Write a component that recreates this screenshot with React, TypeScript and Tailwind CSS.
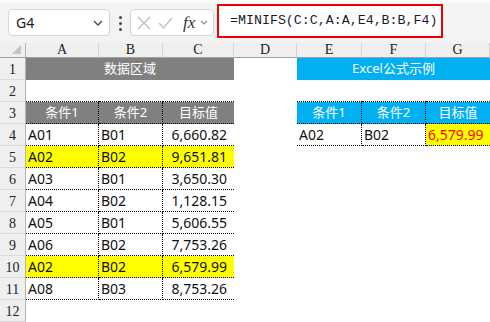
const cols = ["A", "B", "C", "D", "E", "F", "G"];

type Row = { a: string; b: string; c: string; hi?: boolean };

const data: Row[] = [
  { a: "A01", b: "B01", c: "6,660.82" },
  { a: "A02", b: "B02", c: "9,651.81", hi: true },
  { a: "A03", b: "B01", c: "3,650.30" },
  { a: "A04", b: "B02", c: "1,128.15" },
  { a: "A05", b: "B01", c: "5,606.55" },
  { a: "A06", b: "B02", c: "7,753.26" },
  { a: "A02", b: "B02", c: "6,579.99", hi: true },
  { a: "A08", b: "B03", c: "8,753.26" },
];

const dot = "border-black border-dotted";

function RowNum({ n }: { n: number }) {
  return (
    <div className="flex items-end justify-center border-r border-b border-r-[#b4b4b4] border-b-[#dadada] bg-[#efefef] pb-[2px] font-['Liberation_Serif',serif] text-[14px] leading-none text-[#222]">
      {n}
    </div>
  );
}

function Cell({
  children,
  className = "",
}: {
  children?: React.ReactNode;
  className?: string;
}) {
  return (
    <div className={`flex items-center overflow-hidden whitespace-nowrap ${className}`}>
      {children}
    </div>
  );
}

export default function App() {
  return (
    <div className="h-[322px] w-[490px] overflow-hidden bg-white font-['Noto_Sans','Noto_Sans_CJK_SC',sans-serif]">
      {/* formula bar */}
      <div className="flex h-[43px] items-start border-t-[3px] border-t-[#fafafa] bg-[#f3f3f3] pt-[1px]">
        <div className="ml-[8px] mt-[5px] flex h-[27px] w-[102px] items-center justify-between rounded-[4px] border border-[#d6d6d6] bg-white pl-[7px] pr-[6px]">
          <span className="text-[14px] text-[#222]">G4</span>
          <svg width="10" height="6" viewBox="0 0 10 6" fill="none" stroke="#444" strokeWidth="1.3">
            <path d="M1 1l4 4 4-4" />
          </svg>
        </div>
        <div className="ml-[9px] mt-[12px] flex flex-col gap-[3px]">
          <span className="h-[3px] w-[3px] rounded-full bg-[#444]" />
          <span className="h-[3px] w-[3px] rounded-full bg-[#444]" />
          <span className="h-[3px] w-[3px] rounded-full bg-[#444]" />
        </div>
        <div className="ml-[8px] mt-[5px] flex h-[27px] w-[84px] items-center rounded-[4px] border border-[#d6d6d6] bg-white pl-[6px]">
          <svg width="14" height="14" viewBox="0 0 14 14" stroke="#bdbdbd" strokeWidth="1.2">
            <path d="M1 1l12 12M13 1L1 13" />
          </svg>
          <svg className="ml-[7px]" width="15" height="12" viewBox="0 0 15 12" fill="none" stroke="#bdbdbd" strokeWidth="1.2">
            <path d="M1 6l4.5 5L14 1" />
          </svg>
          <span className="ml-[10px] font-['Liberation_Serif',serif] text-[17px] italic leading-none text-[#333]">
            fx
          </span>
          <svg className="ml-[5px]" width="8" height="5" viewBox="0 0 8 5" fill="none" stroke="#888" strokeWidth="1.1">
            <path d="M1 1l3 3 3-3" />
          </svg>
        </div>
        <div className="ml-[3px] flex h-[34px] w-[226px] items-center border-2 border-[#ee0000] bg-white pl-[11px]">
          <span className="font-['Liberation_Mono',monospace] text-[13.3px] text-[#1b1b2f]">
            =MINIFS(C:C,A:A,E4,B:B,F4)
          </span>
        </div>
      </div>

      {/* sheet */}
      <div className="grid grid-cols-[26px_73px_64px_71px_63px_65px_64px_64px] grid-rows-[15px] auto-rows-[22px]">
        {/* column header */}
        <div className="relative border-r border-b border-r-[#b4b4b4] border-b-[#a0a0a0] bg-[#efefef]">
          <svg className="absolute right-[4px] bottom-[3px]" width="9" height="9" viewBox="0 0 9 9">
            <path d="M9 0V9H0z" fill="#c4c4c4" />
          </svg>
        </div>
        {cols.map((c) => (
          <div
            key={c}
            className="flex items-center justify-center border-r border-b border-r-[#d3d3d3] border-b-[#a0a0a0] bg-[#efefef] font-['Liberation_Serif',serif] text-[14px] leading-none text-[#222]"
          >
            {c}
          </div>
        ))}

        {/* row 1 */}
        <RowNum n={1} />
        <Cell className="col-span-3 justify-center bg-[#808080] text-[13px] text-white">数据区域</Cell>
        <Cell />
        <Cell className="col-span-3 justify-center bg-[#00b0f0] text-[13px] text-white">Excel公式示例</Cell>

        {/* row 2 */}
        <RowNum n={2} />
        <Cell className={`border-b ${dot}`} />
        <Cell className={`border-b ${dot}`} />
        <Cell className={`border-b ${dot}`} />
        <Cell />
        <Cell className={`border-b ${dot}`} />
        <Cell className={`border-b ${dot}`} />
        <Cell className={`border-b ${dot}`} />

        {/* row 3 */}
        <RowNum n={3} />
        {["条件1", "条件2", "目标值"].map((t, j) => (
          <Cell
            key={"l" + t}
            className={`justify-center border-b ${j < 2 ? "border-r" : ""} ${dot} bg-[#808080] text-[13px] text-white`}
          >
            {t}
          </Cell>
        ))}
        <Cell />
        {["条件1", "条件2", "目标值"].map((t, j) => (
          <Cell
            key={"r" + t}
            className={`justify-center border-b ${j < 2 ? "border-r" : ""} ${dot} bg-[#00b0f0] text-[13px] text-white`}
          >
            {t}
          </Cell>
        ))}

        {/* data rows */}
        {data.map((r, i) => {
          const bg = r.hi ? "bg-[#ffff00]" : "bg-white";
          return [
            <RowNum key={"n" + i} n={i + 4} />,
            <Cell key={"a" + i} className={`border-r border-b ${dot} ${bg} pl-[2px] text-[14px] text-[#111]`}>
              {r.a}
            </Cell>,
            <Cell key={"b" + i} className={`border-r border-b ${dot} ${bg} pl-[2px] text-[14px] text-[#111]`}>
              {r.b}
            </Cell>,
            <Cell key={"c" + i} className={`justify-end border-b ${dot} ${bg} pr-[7px] text-[14px] text-[#111]`}>
              {r.c}
            </Cell>,
            i === 0 ? (
              [
                <Cell key="d0" />,
                <Cell key="e0" className={`border-r border-b ${dot} pl-[2px] text-[14px] text-[#111]`}>
                  A02
                </Cell>,
                <Cell key="f0" className={`border-r border-b ${dot} pl-[2px] text-[14px] text-[#111]`}>
                  B02
                </Cell>,
                <Cell key="g0" className={`border-b ${dot} bg-[#ffff00] pl-[2px] text-[14px] text-[#ff0000]`}>
                  6,579.99
                </Cell>,
              ]
            ) : (
              [<Cell key={"d" + i} />, <Cell key={"e" + i} />, <Cell key={"f" + i} />, <Cell key={"g" + i} />]
            ),
          ];
        })}

        <RowNum n={12} />
      </div>
    </div>
  );
}
